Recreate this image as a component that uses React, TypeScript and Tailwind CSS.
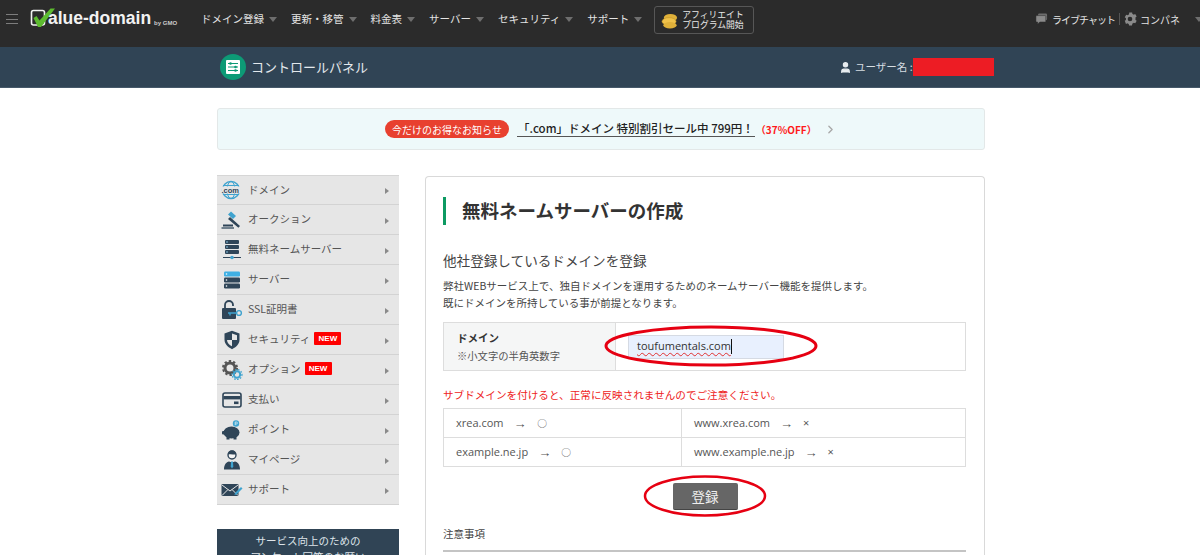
import React from "react";
import { ChevronRight, User } from "lucide-react";

const font = "font-['Noto_Sans_CJK_JP','Liberation_Sans',sans-serif]";

const navItems = ["ドメイン登録", "更新・移管", "料金表", "サーバー", "セキュリティ", "サポート"];

function Caret() {
  return <span className="ml-[5px] inline-block h-0 w-0 border-x-[4px] border-t-[5px] border-x-transparent border-t-[#6e6e6e]" />;
}

function DomainIcon() {
  return (
    <svg viewBox="0 0 22 20" className="h-5 w-[22px]">
      <circle cx="10" cy="10" r="8.5" fill="none" stroke="#3fa3cf" strokeWidth="1.4" />
      <ellipse cx="10" cy="10" rx="4" ry="8.5" fill="none" stroke="#3fa3cf" strokeWidth="1" />
      <path d="M2 5.5h16M2 14.5h16" stroke="#3fa3cf" strokeWidth="1" />
      <rect x="1" y="6.5" width="21" height="7" fill="#e6e6e6" />
      <text x="0.5" y="12.8" fontSize="7.5" fontWeight="700" fill="#2f4558" fontFamily="Liberation Sans">.com</text>
    </svg>
  );
}

function AuctionIcon() {
  return (
    <svg viewBox="0 0 22 20" className="h-5 w-[22px]">
      <path d="M9 7l10 9-1.6 1.8L7 9z" fill="#2f4558" />
      <path d="M10 1.5l5 4.5-3 3-5-4.5z" fill="#3fa3cf" />
      <rect x="2" y="14.5" width="10" height="2" fill="#2f4558" />
      <rect x="0.5" y="17" width="12.5" height="2" fill="#6f7f8c" />
    </svg>
  );
}

function FreeServerIcon() {
  return (
    <svg viewBox="0 0 22 20" className="h-5 w-[22px]">
      <rect x="4" y="0" width="14" height="4" rx="1" fill="#2f4558" />
      <rect x="4" y="5" width="14" height="4" rx="1" fill="#2f4558" />
      <rect x="4" y="10" width="14" height="4" rx="1" fill="#2f4558" />
      <path d="M2 17.5h18" stroke="#2f4558" strokeWidth="1" />
      <circle cx="11" cy="17.5" r="1.8" fill="#3fa3cf" />
      <circle cx="6" cy="2" r=".8" fill="#8fd0ee" />
      <circle cx="6" cy="7" r=".8" fill="#8fd0ee" />
      <circle cx="6" cy="12" r=".8" fill="#8fd0ee" />
    </svg>
  );
}

function ServerIcon() {
  return (
    <svg viewBox="0 0 22 20" className="h-5 w-[22px]">
      <rect x="3" y="1.5" width="16" height="5" rx="1.2" fill="#3fb0e4" />
      <rect x="3" y="7.5" width="16" height="5" rx="1.2" fill="#2f4558" />
      <rect x="3" y="13.5" width="16" height="5" rx="1.2" fill="#2f4558" />
      <circle cx="5.5" cy="4" r=".8" fill="#fff" />
      <circle cx="5.5" cy="10" r=".8" fill="#fff" />
      <circle cx="5.5" cy="16" r=".8" fill="#fff" />
    </svg>
  );
}

function SslIcon() {
  return (
    <svg viewBox="0 0 22 20" className="h-5 w-[22px]">
      <path d="M4 8V5a4 4 0 0 1 8 0v1" fill="none" stroke="#2f4558" strokeWidth="1.8" />
      <rect x="1" y="8" width="14" height="11" rx="1" fill="#2f4558" />
      <circle cx="18" cy="13" r="2.4" fill="none" stroke="#3fa3cf" strokeWidth="1.4" />
      <path d="M7 13h9M9 13v2.5" stroke="#3fa3cf" strokeWidth="1.4" />
    </svg>
  );
}

function ShieldIcon() {
  return (
    <svg viewBox="0 0 22 20" className="h-5 w-[22px]">
      <path d="M11 .8l7.5 2.6v6.2c0 4.6-3.4 7.8-7.5 9.6-4.1-1.8-7.5-5-7.5-9.6V3.4z" fill="#2f4558" />
      <path d="M11 3.5l5 1.8V10h-5zM11 10v6.2C8.4 15 6 13 6 10z" fill="#e6e6e6" />
    </svg>
  );
}

function OptionIcon() {
  return (
    <svg viewBox="0 0 22 20" className="h-5 w-[22px]">
      <circle cx="9" cy="8" r="5" fill="none" stroke="#555" strokeWidth="3" />
      <circle cx="9" cy="8" r="7" fill="none" stroke="#555" strokeWidth="2" strokeDasharray="2.4 2.1" />
      <circle cx="16" cy="14.5" r="3.2" fill="none" stroke="#3fa3cf" strokeWidth="2" />
      <circle cx="16" cy="14.5" r="5" fill="none" stroke="#3fa3cf" strokeWidth="1.2" strokeDasharray="1.6 1.4" />
    </svg>
  );
}

function CardIcon() {
  return (
    <svg viewBox="0 0 22 20" className="h-5 w-[22px]">
      <rect x="2" y="3" width="18" height="14" rx="2" fill="#e6e6e6" stroke="#2f4558" strokeWidth="1.6" />
      <rect x="2.5" y="6" width="17" height="3.4" fill="#2f4558" />
      <rect x="13" y="11.5" width="4.5" height="2.6" fill="#2f4558" />
    </svg>
  );
}

function PigIcon() {
  return (
    <svg viewBox="0 0 22 20" className="h-5 w-[22px]">
      <ellipse cx="10.5" cy="12.5" rx="8" ry="6" fill="#2f4558" />
      <rect x="1" y="11" width="3" height="3.5" rx="1" fill="#2f4558" />
      <rect x="5.5" y="16" width="3" height="3.5" fill="#2f4558" />
      <rect x="12.5" y="16" width="3" height="3.5" fill="#2f4558" />
      <circle cx="15" cy="3.5" r="3.2" fill="#3fa3cf" />
      <path d="M14.2 5.2V2h1.2a1 1 0 0 1 0 2h-1.2" stroke="#fff" strokeWidth=".6" fill="none" />
    </svg>
  );
}

function PersonIcon() {
  return (
    <svg viewBox="0 0 22 20" className="h-5 w-[22px]">
      <circle cx="11" cy="5" r="4" fill="#f5f5f5" stroke="#2f4558" strokeWidth="1.4" />
      <path d="M7 4.5a4 4 0 0 1 8 0c-2 .3-5-.8-8 0z" fill="#2f4558" />
      <path d="M3 19.5c0-5 2.4-7.5 5-8l3 1 3-1c2.6.5 5 3 5 8z" fill="#2f4558" />
      <path d="M10 11.5h2l.3 5-1.3 2-1.3-2z" fill="#3fa3cf" />
    </svg>
  );
}

function MailIcon() {
  return (
    <svg viewBox="0 0 22 20" className="h-5 w-[22px]">
      <rect x="0.5" y="4" width="17" height="12" rx="1" fill="#2f4558" />
      <path d="M1 5l8 6 8-6M1 15.5l6-6M17 15.5l-6-6" stroke="#e6e6e6" strokeWidth="1" fill="none" />
      <path d="M14 13l6-6 1.5 1.5-6 6-2 .5z" fill="#3fa3cf" />
    </svg>
  );
}

const sideItems: { label: string; icon: React.ReactNode; isNew?: boolean }[] = [
  { label: "ドメイン", icon: <DomainIcon /> },
  { label: "オークション", icon: <AuctionIcon /> },
  { label: "無料ネームサーバー", icon: <FreeServerIcon /> },
  { label: "サーバー", icon: <ServerIcon /> },
  { label: "SSL証明書", icon: <SslIcon /> },
  { label: "セキュリティ", icon: <ShieldIcon />, isNew: true },
  { label: "オプション", icon: <OptionIcon />, isNew: true },
  { label: "支払い", icon: <CardIcon /> },
  { label: "ポイント", icon: <PigIcon /> },
  { label: "マイページ", icon: <PersonIcon /> },
  { label: "サポート", icon: <MailIcon /> },
];

function Header() {
  return (
    <header className="flex h-[47px] items-start overflow-hidden bg-[#2b2b2b]">
      <div className="mt-[14px] ml-[6px] flex h-[10px] w-[12px] flex-col justify-between">
        <span className="h-px bg-[#7d7d7d]" />
        <span className="h-px bg-[#7d7d7d]" />
        <span className="h-px bg-[#7d7d7d]" />
      </div>
      <div className="mt-[8px] ml-[12px] flex h-[20px] w-[171px] shrink-0 items-end">
        <svg viewBox="0 0 26 20" className="h-[20px] w-[26px] shrink-0">
          <rect x="1.5" y="2.5" width="13" height="14.5" rx="2" fill="none" stroke="#f2f2f2" strokeWidth="1.6" />
          <path d="M3.5 10l3-2 3 4.500L20.500.5H25L11 19H8z" fill="#5dbb2f" />
        </svg>
        <span className="-ml-[8px] text-[17.5px] leading-[20px] font-bold text-[#f2f2f2] font-['Liberation_Sans',sans-serif]">alue-domain</span>
        <span className="mb-[1px] ml-[3px] text-[6px] leading-[8px] font-bold text-[#cccccc] font-['Liberation_Sans',sans-serif]">by GMO</span>
      </div>
      <nav className="mt-[10px] flex h-[18px] items-center gap-[14px]">
        {navItems.map((item) => (
          <span key={item} className="flex items-center text-[10.5px] leading-[18px] whitespace-nowrap text-[#e4e4e4]">
            {item}
            <Caret />
          </span>
        ))}
      </nav>
      <div className="mt-[6px] ml-[12px] flex h-[28px] w-[100px] shrink-0 items-center rounded-[3px] border border-[#575757] pl-[6px]">
        <svg viewBox="0 0 18 18" className="h-[17px] w-[17px] shrink-0">
          <ellipse cx="10" cy="6" rx="7" ry="4" fill="#e0b13a" />
          <ellipse cx="8.5" cy="10" rx="7.5" ry="4" fill="#f0c24a" stroke="#b98c23" strokeWidth=".5" />
          <ellipse cx="9.5" cy="14" rx="7" ry="3.5" fill="#e0b13a" />
        </svg>
        <span className="ml-[4px] text-[8.8px] leading-[10px] whitespace-nowrap text-[#e8e8e8]">
          アフィリエイト
          <br />
          プログラム開始
        </span>
      </div>
      <div className="mt-[10px] -mr-[3px] ml-auto flex h-[18px] items-center">
        <svg viewBox="0 0 14 14" className="h-[12px] w-[13px]">
          <rect x="3" y="0.5" width="10.5" height="8" rx="1.5" fill="#6e6e6e" />
          <path d="M1.5 3H11a1 1 0 0 1 1 1v5.500a1 1 0 0 1-1 1H5L2.500 13v-2.500h-1a1 1 0 0 1-1-1V4a1 1 0 0 1 1-1z" fill="#8a8a8a" stroke="#2b2b2b" strokeWidth=".6" />
        </svg>
        <span className="ml-[4px] text-[10px] tracking-[-1px] whitespace-nowrap text-[#e4e4e4]">ライブチャット</span>
        <span className="ml-[4px] h-[12px] w-px bg-[#555555]" />
        <svg viewBox="0 0 24 24" className="ml-[3px] h-[14px] w-[14px]" fill="#8a8a8a">
          <path d="M12 8a4 4 0 1 0 0 8 4 4 0 0 0 0-8zm9.400 5.500l2.100 1.600-2.500 4.300-2.500-1a8 8 0 0 1-2.300 1.300L15.300 23h-5l-.4-2.300a8 8 0 0 1-2.300-1.300l-2.500 1L3 15.100l2.100-1.600a8 8 0 0 1 0-3L3 8.900l2.500-4.300 2.500 1a8 8 0 0 1 2.300-1.300L10.700 1h5l.4 2.300a8 8 0 0 1 2.300 1.300l2.500-1 2.500 4.300-2.100 1.600a8 8 0 0 1 .1 3z" />
        </svg>
        <span className="ml-[3px] text-[10px] whitespace-nowrap text-[#e4e4e4]">コンパネ</span>
        <span className="ml-[10px] flex">
          <Caret />
        </span>
      </div>
    </header>
  );
}

function SubHeader() {
  return (
    <div className="border-b border-[#46596a] bg-[#304455]">
      <div className="ml-[217px] flex h-[40px] w-[768px] items-center">
        <span className="ml-[3px] flex h-[26px] w-[26px] shrink-0 items-center justify-center rounded-full bg-[#0d9a76]">
          <svg viewBox="0 0 14 14" className="h-[14px] w-[14px]">
            <rect width="14" height="14" rx="1" fill="#ffffff" />
            <path d="M2 3.500h10M2 7h10M2 10.500h10" stroke="#0d9a76" strokeWidth="1" />
            <circle cx="4.500" cy="3.500" r="1.300" fill="#0d9a76" />
            <circle cx="9.500" cy="7" r="1.300" fill="#0d9a76" />
            <circle cx="9.500" cy="10.500" r="1.300" fill="#0d9a76" />
          </svg>
        </span>
        <span className="ml-[5px] w-[117px] shrink-0 text-[13px] whitespace-nowrap text-[#e3e8ec]">コントロールパネル</span>
        <User size={13} className="ml-[471px] shrink-0 fill-[#e8edf0] text-[#e8edf0]" />
        <span className="ml-[3px] w-[58px] shrink-0 text-[10.5px] whitespace-nowrap text-[#d6dde2]">ユーザー名 :</span>
        <span className="h-[18px] w-[81px] shrink-0 bg-[#ed1c24]" />
      </div>
    </div>
  );
}

function Banner() {
  return (
    <div className="mt-[20px] ml-[217px] flex h-[42px] w-[768px] items-center rounded-[3px] border border-[#e3e8e8] bg-[#eef9fa] pl-[167px]">
      <span className="flex h-[18px] w-[124px] items-center justify-center rounded-full bg-[#e8402f] text-[10px] text-white">今だけのお得なお知らせ</span>
      <span className="ml-[8px] border-b border-[#555555] px-[1px] text-[11.5px] leading-[15px] font-medium text-[#222222]">「.com」ドメイン 特別割引セール中 799円！</span>
      <span className="ml-[1px] text-[10px] font-bold text-[#ff1a1a]">（37%OFF）</span>
      <ChevronRight size={13} strokeWidth={2.5} className="ml-[7px] text-[#a9a9a9]" />
    </div>
  );
}

function Sidebar() {
  return (
    <aside className="w-[182px] shrink-0">
      <ul className="bg-[#e6e6e6]">
        {sideItems.map((item) => (
          <li key={item.label} className="flex h-[30px] items-center border-b border-[#d3d3d3] pl-[4px] first:border-t first:border-t-[#d6d6d6]">
            <span className="flex w-[22px] shrink-0 justify-center">{item.icon}</span>
            <span className="-mt-[1px] ml-[5px] text-[10.5px] whitespace-nowrap text-[#555555]">{item.label}</span>
            {item.isNew && (
              <span className="-mt-[2px] ml-[4px] flex h-[13px] w-[27px] items-center justify-center rounded-[1px] bg-[#ff0000] text-[8px] font-bold text-white font-['Liberation_Sans',sans-serif]">NEW</span>
            )}
            <span className="mt-[2px] mr-[10px] ml-auto h-0 w-0 border-y-[3.5px] border-l-[4px] border-y-transparent border-l-[#8a8a8a]" />
          </li>
        ))}
      </ul>
      <div className="mt-[24px] flex h-[60px] flex-col items-center bg-[#304455] pt-[4px] text-[10.5px] leading-[16px] text-[#dfe5ea]">
        <span>サービス向上のための</span>
        <span>アンケート回答のお願い</span>
      </div>
    </aside>
  );
}

function Card() {
  return (
    <section className="relative mt-[1px] h-[400px] w-[560px] rounded-t-[4px] border border-b-0 border-[#d9d9d9] bg-white px-[17px] pt-[20px]">
      <h1 className="flex h-[28px] items-center border-l-[3px] border-[#0d9a62] pl-[16px] text-[18.5px] font-bold text-[#333333]">無料ネームサーバーの作成</h1>
      <h2 className="mt-[25px] text-[13.6px] leading-[20px] text-[#444444]">他社登録しているドメインを登録</h2>
      <p className="mt-[8px] text-[10.5px] leading-[16.5px] text-[#444444]">
        弊社WEBサービス上で、独自ドメインを運用するためのネームサーバー機能を提供します。
        <br />
        既にドメインを所持している事が前提となります。
      </p>
      <div className="mt-[11px] flex h-[49px] w-[523px] border border-[#dddddd]">
        <div className="flex w-[172px] flex-col justify-center border-r border-[#dddddd] bg-[#f5f6f6] pl-[13px]">
          <span className="text-[10.5px] leading-[18px] font-bold text-[#333333]">ドメイン</span>
          <span className="text-[10.3px] leading-[18px] text-[#555555]">※小文字の半角英数字</span>
        </div>
        <div className="flex items-center pl-[12px]">
          <div className="flex h-[24px] w-[156px] items-center border border-[#d5dae3] bg-[#e8f0fe] pl-[8px] text-[11px] text-[#333333] font-['Open_Sans',sans-serif]">
            <span className="underline decoration-[#e03030] decoration-wavy decoration-1 underline-offset-2">toufumentals.com</span>
            <span className="h-[15px] w-px bg-[#111111]" />
          </div>
        </div>
      </div>
      <p className="mt-[16px] text-[10.6px] leading-[16px] whitespace-nowrap text-[#ee2222]">サブドメインを付けると、正常に反映されませんのでご注意ください。</p>
      <div className="mt-[5px] grid w-[523px] grid-cols-[238px_1fr] border-t border-l border-[#dddddd] text-[11px] text-[#555555]">
        {[
          ["xrea.com", "〇"],
          ["www.xrea.com", "×"],
          ["example.ne.jp", "〇"],
          ["www.example.ne.jp", "×"],
        ].map(([domain, mark]) => (
          <div key={domain} className="flex h-[29px] items-center gap-[10px] border-r border-b border-[#dddddd] pl-[12px] font-['Open_Sans',sans-serif]">
            <span>{domain}</span>
            <span className="text-[13px] leading-none font-['Liberation_Sans',sans-serif]">→</span>
            <span className={mark === "〇" ? "text-[10px] text-[#444444]" : ""}>{mark}</span>
          </div>
        ))}
      </div>
      <div className="mt-[16px] flex justify-center">
        <button className="h-[27px] w-[65px] rounded-[2px] border-b border-[#444444] bg-[#666666] text-[13.5px] text-[#eeeeee]">登録</button>
      </div>
      <p className="mt-[16px] text-[10.5px] leading-[16px] text-[#444444]">注意事項</p>
      <div className="mt-[8px] h-[2px] w-[523px] bg-[#c4c4c4]" />
      <svg className="pointer-events-none absolute top-[142px] left-[177px] h-[54px] w-[216px]" viewBox="0 0 216 54" fill="none">
        <ellipse cx="108" cy="27" rx="105" ry="19" stroke="#e60012" strokeWidth="3" />
      </svg>
      <svg className="pointer-events-none absolute top-[297px] left-[216px] h-[44px] w-[126px]" viewBox="0 0 126 44" fill="none">
        <ellipse cx="63" cy="22" rx="60" ry="19.5" stroke="#e60012" strokeWidth="2.5" />
      </svg>
    </section>
  );
}

export default function App() {
  return (
    <div className={`h-[555px] overflow-hidden bg-white ${font}`}>
      <Header />
      <SubHeader />
      <Banner />
      <div className="mt-[25px] ml-[217px] flex w-[768px] gap-[26px]">
        <Sidebar />
        <Card />
      </div>
    </div>
  );
}
